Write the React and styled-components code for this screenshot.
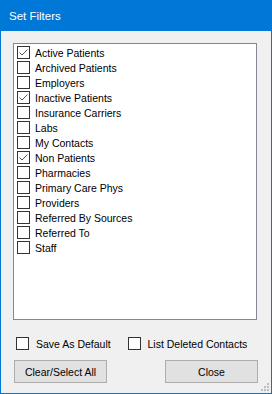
import React, { useState } from 'react';
import styled, { createGlobalStyle } from 'styled-components';

const GlobalStyle = createGlobalStyle`
    html, body {
        margin: 0;
        padding: 0;
        background: #f0f0f0;
    }
    * {
        box-sizing: border-box;
    }
`;

const Window = styled.div`
    position: relative;
    width: 272px;
    height: 394px;
    border: 1px solid #0078d7;
    background: #f0f0f0;
    display: flex;
    flex-direction: column;
    font-family: "Liberation Sans", Arial, sans-serif;
    font-size: 10.5px;
    color: #000;
`;

const TitleBar = styled.div`
    height: 30px;
    background: #0078d7;
    color: #fff;
    font-size: 11.5px;
    display: flex;
    align-items: center;
    padding: 0 0 0 8px;
`;

const Body = styled.div`
    flex: 1;
    display: flex;
    flex-direction: column;
    padding: 12px 14px 10px 12px;
`;

const ListBox = styled.div`
    height: 277px;
    border: 1px solid #828790;
    background: #fff;
    padding: 1px 0 0 3px;
`;

const Item = styled.label`
    height: 15px;
    display: flex;
    align-items: center;
    gap: 5px;
    white-space: nowrap;
    cursor: default;
`;

const Box = styled.span`
    width: 13px;
    height: 13px;
    flex: none;
    border: 1px solid #333;
    background: #fff;
    display: flex;
`;

const OptionsRow = styled.div`
    margin-top: 17px;
    height: 13px;
    display: flex;
    align-items: center;
    padding-left: 3px;
`;

const Option = styled.label`
    display: flex;
    align-items: center;
    gap: 7px;
    width: ${p => p.$width}px;
    white-space: nowrap;
`;

const ButtonRow = styled.div`
    margin-top: 10px;
    display: flex;
    justify-content: space-between;
    padding: 0 0 0 1px;
    margin-right: -1px;
`;

const Button = styled.button`
    width: 93px;
    height: 23px;
    border: 1px solid #adadad;
    background: #e1e1e1;
    font-family: "Liberation Sans", Arial, sans-serif;
    font-size: 10.5px;
    color: #000;
    padding: 0;
    outline: none;
`;

const Grip = styled.svg`
    position: absolute;
    right: 2px;
    bottom: 2px;
`;

const filters = [
    ['Active Patients', true],
    ['Archived Patients', false],
    ['Employers', false],
    ['Inactive Patients', true],
    ['Insurance Carriers', false],
    ['Labs', false],
    ['My Contacts', false],
    ['Non Patients', true],
    ['Pharmacies', false],
    ['Primary Care Phys', false],
    ['Providers', false],
    ['Referred By Sources', false],
    ['Referred To', false],
    ['Staff', false],
];

const Check = ({ checked }) => (
    <Box>
        {checked && (
            <svg width="11" height="11" viewBox="0 0 11 11">
                <polyline points="1.5,5.5 4,8 9.5,2.5" fill="none" stroke="#555" strokeWidth="1" />
            </svg>
        )}
    </Box>
);

const App = () => {
    const [checks, setChecks] = useState(filters.map(f => f[1]));

    const toggle = i => {
        const next = [...checks];
        next[i] = !next[i];
        setChecks(next);
    };

    const clearSelect = () => {
        const anyChecked = checks.some(Boolean);
        setChecks(checks.map(() => !anyChecked));
    };

    return (
        <>
            <GlobalStyle />
            <Window>
                <TitleBar>Set Filters</TitleBar>
                <Body>
                    <ListBox>
                        {filters.map(([name], i) => (
                            <Item key={name} onClick={() => toggle(i)}>
                                <Check checked={checks[i]} />
                                {name}
                            </Item>
                        ))}
                    </ListBox>
                    <OptionsRow>
                        <Option $width={112}>
                            <Check checked={false} />
                            Save As Default
                        </Option>
                        <Option $width={130}>
                            <Check checked={false} />
                            List Deleted Contacts
                        </Option>
                    </OptionsRow>
                    <ButtonRow>
                        <Button onClick={clearSelect}>Clear/Select All</Button>
                        <Button>Close</Button>
                    </ButtonRow>
                </Body>
                <Grip width="8" height="8" viewBox="0 0 8 8">
                    <rect x="6" y="0" width="2" height="2" fill="#bcbcbc" />
                    <rect x="3" y="3" width="2" height="2" fill="#bcbcbc" />
                    <rect x="6" y="3" width="2" height="2" fill="#bcbcbc" />
                    <rect x="0" y="6" width="2" height="2" fill="#bcbcbc" />
                    <rect x="3" y="6" width="2" height="2" fill="#bcbcbc" />
                    <rect x="6" y="6" width="2" height="2" fill="#bcbcbc" />
                </Grip>
            </Window>
        </>
    );
};

export default App;
